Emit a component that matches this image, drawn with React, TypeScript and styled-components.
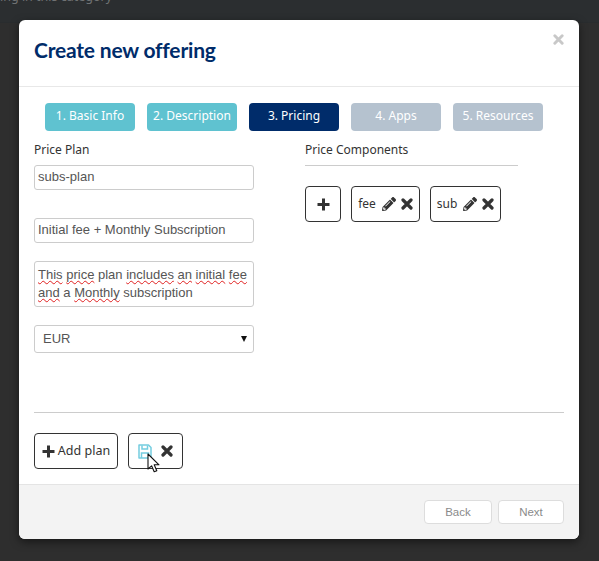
import React from "react";
import styled, { createGlobalStyle } from "styled-components";
import { FaPencilAlt } from "react-icons/fa";

const Global = createGlobalStyle`
  html, body { margin: 0; padding: 0; height: 100%; background: #2e2e2e; overflow: hidden; }
  #root { height: 100%; }
  * { box-sizing: border-box; }
`;

const uiFont = `"Noto Sans", "Open Sans", sans-serif`;
const formFont = `"Liberation Sans", Arial, sans-serif`;

const Page = styled.div`
  position: relative;
  width: 599px;
  height: 561px;
  overflow: hidden;
  background: #2e2e2e;
`;
const TopBar = styled.div`
  height: 23px;
  background: #2b2e30;
  border-bottom: 1px solid #292c2e;
  color: #6f7274;
  font: 12.5px ${uiFont};
  line-height: 1;
  overflow: hidden;
`;
const TopText = styled.div`
  margin-top: -9px;
`;
const Modal = styled.div`
  position: absolute;
  left: 19px;
  top: 20px;
  width: 560px;
  height: 519px;
  background: #fff;
  border-radius: 6px;
  display: flex;
  flex-direction: column;
  box-shadow: 0 3px 9px rgba(0, 0, 0, 0.5);
`;
const Header = styled.header`
  height: 67px;
  flex: none;
  padding: 0 15px;
  border-bottom: 1px solid #e8e8e8;
  display: flex;
  align-items: flex-start;
  justify-content: space-between;
`;
const Title = styled.h4`
  margin: 14px 0 0;
  font: 700 21px/32px Lato, ${uiFont};
  color: #002c6a;
  letter-spacing: -0.2px;
`;
const CloseWrap = styled.span`
  margin: 14px 0 0 0;
  color: #c8c8c8;
  display: flex;
`;
const Body = styled.div`
  flex: 1;
  padding: 16px 15px 0;
  display: flex;
  flex-direction: column;
`;
const Steps = styled.div`
  display: flex;
  gap: 12px;
  padding-left: 11px;
`;
const Step = styled.div<{ $state: "done" | "active" | "todo" }>`
  width: 90px;
  height: 28px;
  border-radius: 4px;
  text-align: center;
  color: #fff;
  font: 12px/25px ${uiFont};
  white-space: nowrap;
  background: ${(p) =>
    p.$state === "done" ? "#5fc2d0" : p.$state === "active" ? "#002c6a" : "#b5c2cf"};
`;
const Columns = styled.div`
  display: flex;
  margin-top: 9px;
  height: 272px;
`;
const LeftCol = styled.div`
  width: 220px;
  display: flex;
  flex-direction: column;
`;
const RightCol = styled.div`
  width: 213px;
  margin-left: 51px;
`;
const Label = styled.div`
  font: 12px/20px ${uiFont};
  color: #333;
  height: 25px;
`;
const Underlined = styled(Label)`
  height: 26px;
  border-bottom: 1px solid #ccc;
`;
const TextInput = styled.input`
  display: block;
  width: 220px;
  height: 25px;
  padding: 0 3px 2px;
  border: 1px solid #ccc;
  border-radius: 3px;
  background: #fff;
  color: #555;
  font: 13px ${formFont};
  outline: none;
  margin-bottom: 28px;
  &:last-of-type { margin-bottom: 18px; }
`;
const Area = styled.div`
  width: 220px;
  height: 46px;
  padding: 4px 3px;
  border: 1px solid #ccc;
  border-radius: 3px;
  color: #555;
  font: 13px/18px ${formFont};
  white-space: nowrap;
  margin-bottom: 18px;
`;
const Typo = styled.span`
  text-decoration: underline wavy #e02020 1px;
  text-underline-offset: 1px;
  text-decoration-skip-ink: none;
`;
const SelectWrap = styled.div`
  position: relative;
  width: 220px;
  height: 28px;
  &::after {
    content: "";
    position: absolute;
    right: 7px;
    top: 11px;
    border-left: 3px solid transparent;
    border-right: 3px solid transparent;
    border-top: 6px solid #111;
    pointer-events: none;
  }
`;
const Select = styled.select`
  appearance: none;
  display: block;
  width: 100%;
  height: 100%;
  padding: 0 8px 2px;
  border: 1px solid #ccc;
  border-radius: 3px;
  background: #fff;
  color: #555;
  font: 13px ${formFont};
  outline: none;
`;
const ComponentRow = styled.div`
  display: flex;
  gap: 10px;
  margin-top: 20px;
`;
const OutlineButton = styled.div<{ $w: number }>`
  width: ${(p) => p.$w}px;
  height: 36px;
  border: 1px solid #333;
  border-radius: 4px;
  background: #fff;
  color: #333;
  font: 12px/1 ${uiFont};
  display: flex;
  align-items: center;
  justify-content: center;
  white-space: nowrap;
`;
const AddLabel = styled.span`
  font-size: 12.5px;
  margin-left: 3px;
`;
const Pencil = styled.span`
  display: inline-flex;
  color: #333;
  font-size: 14px;
  margin: 0 5px 0 6px;
`;
const SaveSvg = styled.svg`
  margin-right: 9px;
`;
const Rule = styled.hr`
  margin: 0;
  border: 0;
  border-top: 1px solid #ccc;
`;
const PlanRow = styled.div`
  display: flex;
  gap: 10px;
  margin-top: 20px;
  position: relative;
`;
const Cursor = styled.svg`
  position: absolute;
  left: 113px;
  top: 20px;
`;
const Footer = styled.footer`
  height: 55px;
  flex: none;
  background: #f3f3f3;
  border-top: 1px solid #e4e4e4;
  border-radius: 0 0 6px 6px;
  padding: 15px 15px 0 0;
  display: flex;
  justify-content: flex-end;
  gap: 6px;
`;
const FooterButton = styled.div<{ $w: number }>`
  width: ${(p) => p.$w}px;
  height: 24px;
  background: #fff;
  border: 1px solid #ddd;
  border-radius: 4px;
  color: #8a8a8a;
  font: 11.5px/22px ${formFont};
  text-align: center;
`;

const CrossIcon = ({ size = 12 }: { size?: number }) => (
  <svg width={size} height={size} viewBox="0 0 12 12" fill="none">
    <path d="M2 2l8 8M10 2l-8 8" stroke="currentColor" strokeWidth="3.2" strokeLinecap="round" />
  </svg>
);
const PlusIcon = () => (
  <svg width="13" height="13" viewBox="0 0 13 13">
    <path d="M5 .5h3V5h4.500v3H8v4.500H5V8H.5V5H5z" fill="currentColor" />
  </svg>
);
const SaveIcon = () => (
  <SaveSvg width="14" height="15" viewBox="0 0 14 15" fill="none" stroke="#74cde0" strokeWidth="1.500">
    <path d="M1 1h9.500L13 3.500V14H1z" strokeLinejoin="round" />
    <path d="M4 1.500v3.500h5.500V1.500M3.500 14V9h7v5" />
  </SaveSvg>
);

export default function App() {
  return (
    <Page>
      <Global />
      <TopBar>
        <TopText>ing in this category</TopText>
      </TopBar>
      <Modal>
        <Header>
          <Title>Create new offering</Title>
          <CloseWrap>
            <CrossIcon size={11} />
          </CloseWrap>
        </Header>
        <Body>
          <Steps>
            <Step $state="done">1. Basic Info</Step>
            <Step $state="done">2. Description</Step>
            <Step $state="active">3. Pricing</Step>
            <Step $state="todo">4. Apps</Step>
            <Step $state="todo">5. Resources</Step>
          </Steps>
          <Columns>
            <LeftCol>
              <Label>Price Plan</Label>
              <TextInput readOnly value="subs-plan" />
              <TextInput readOnly value="Initial fee + Monthly Subscription" />
              <Area>
                <Typo>This</Typo> <Typo>price</Typo> plan <Typo>includes</Typo> <Typo>an</Typo>{" "}
                <Typo>initial</Typo> <Typo>fee</Typo>
                <br />
                <Typo>and</Typo> a <Typo>Monthly</Typo> subscription
              </Area>
              <SelectWrap>
                <Select defaultValue="EUR">
                  <option>EUR</option>
                </Select>
              </SelectWrap>
            </LeftCol>
            <RightCol>
              <Underlined>Price Components</Underlined>
              <ComponentRow>
                <OutlineButton $w={36}>
                  <PlusIcon />
                </OutlineButton>
                <OutlineButton $w={69}>
                  fee
                  <Pencil>
                    <FaPencilAlt />
                  </Pencil>
                  <CrossIcon />
                </OutlineButton>
                <OutlineButton $w={71}>
                  sub
                  <Pencil>
                    <FaPencilAlt />
                  </Pencil>
                  <CrossIcon />
                </OutlineButton>
              </ComponentRow>
            </RightCol>
          </Columns>
          <Rule />
          <PlanRow>
            <OutlineButton $w={84}>
              <PlusIcon />
              <AddLabel>Add plan</AddLabel>
            </OutlineButton>
            <OutlineButton $w={55}>
              <SaveIcon />
              <CrossIcon />
            </OutlineButton>
            <Cursor width="14" height="20" viewBox="0 0 14 20">
              <path
                d="M1 1v15l3.600-3.200 2.600 6 2.600-1.100-2.600-5.900h4.800z"
                fill="#fff"
                stroke="#111"
                strokeWidth="1.100"
                strokeLinejoin="round"
              />
            </Cursor>
          </PlanRow>
        </Body>
        <Footer>
          <FooterButton $w={68}>Back</FooterButton>
          <FooterButton $w={66}>Next</FooterButton>
        </Footer>
      </Modal>
    </Page>
  );
}
